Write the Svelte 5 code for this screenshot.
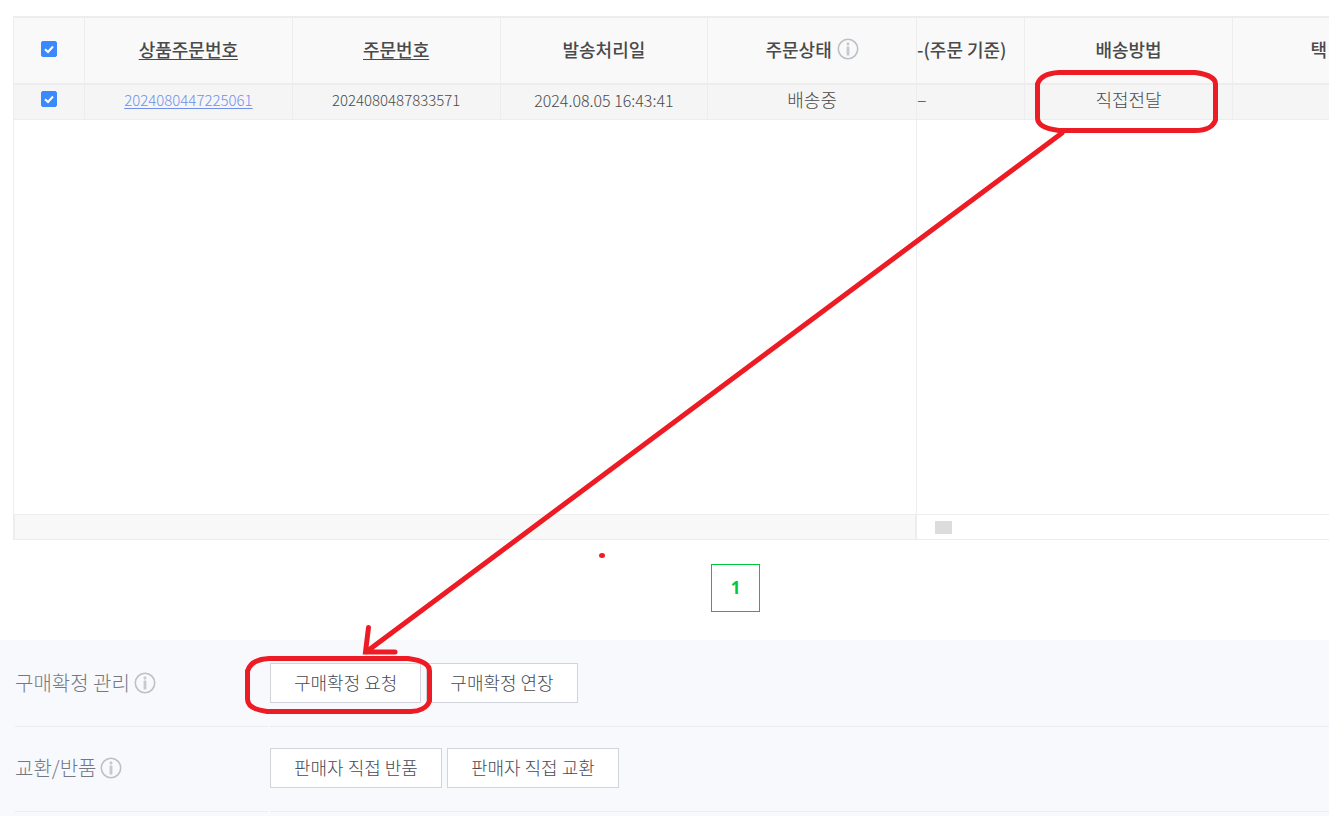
<script>
  let allChecked = $state(true);
  let rowChecked = $state(true);
  const groups = [
    { label: '구매확정 관리', actions: ['구매확정 요청', '구매확정 연장'] },
    { label: '교환/반품', actions: ['판매자 직접 반품', '판매자 직접 교환'] }
  ];
</script>

{#snippet info()}
  <svg class="info" viewBox="0 0 22 22" aria-hidden="true">
    <circle cx="11" cy="11" r="9.7" fill="none" stroke="#bcc0c7" stroke-width="1.6" />
    <rect x="9.6" y="4.600" width="2.800" height="2.800" rx="0.800" fill="#c6c9cf" />
    <rect x="9.6" y="8.600" width="2.800" height="9" rx="0.600" fill="#c6c9cf" />
  </svg>
{/snippet}

<main>
  <section class="grid">
    <div class="pane fixed">
      <table>
        <colgroup><col class="check" /><col /><col /><col /><col /></colgroup>
        <thead>
          <tr>
            <th><input type="checkbox" aria-label="전체" bind:checked={allChecked} /></th>
            <th><a href="#product">상품주문번호</a></th>
            <th><a href="#order">주문번호</a></th>
            <th>발송처리일</th>
            <th><span class="with-info">주문상태 {@render info()}</span></th>
          </tr>
        </thead>
        <tbody>
          <tr>
            <td><input type="checkbox" aria-label="2024080447225061" bind:checked={rowChecked} /></td>
            <td class="num"><a class="link" href="#detail">2024080447225061</a></td>
            <td class="num">2024080487833571</td>
            <td class="num date">2024.08.05 16:43:41</td>
            <td>배송중</td>
          </tr>
        </tbody>
      </table>
      <div class="track"></div>
    </div>
    <div class="pane scrolled">
      <table>
        <colgroup><col class="cut" /><col class="method" /><col /></colgroup>
        <thead>
          <tr><th class="start">-(주문 기준)</th><th>배송방법</th><th class="end">택</th></tr>
        </thead>
        <tbody>
          <tr><td class="start">–</td><td>직접전달</td><td></td></tr>
        </tbody>
      </table>
      <div class="track"><span class="thumb"></span></div>
    </div>
  </section>

  <nav><button class="page">1</button></nav>

  <section class="manage">
    {#each groups as group}
      <div class="row">
        <div class="label with-info">{group.label} {@render info()}</div>
        <div class="actions">
          {#each group.actions as action}<button>{action}</button>{/each}
        </div>
      </div>
    {/each}
  </section>

  <svg class="marks" width="1329" height="816" viewBox="0 0 1329 816" fill="none" stroke="#ed1c24" stroke-width="5" stroke-linecap="round" aria-hidden="true">
    <path d="M1059 72.500H1195C1207 74 1215.500 78 1215.500 84V120C1213 127 1205 130.500 1195 130.500H1059C1047 129 1037.500 125 1037.500 118V84C1040 77 1048 73 1059 72.500Z" />
    <path d="M269 658.500H408C420 660 429.500 664 429.500 671V701C427 708 419 711.500 411 711.500H267C255 710 247.500 706 247.500 699V671C250 663 258 659 269 658.500Z" />
    <path d="M1062 133L366 652M368.500 627.500L365.500 652H395" />
    <ellipse cx="602" cy="555.500" rx="3" ry="2.500" fill="#ed1c24" stroke="none" />
  </svg>
</main>

<style>
  :global(body) {
    margin: 0;
    background: #fff;
    overflow-x: hidden;
  }
  main {
    position: relative;
    overflow: hidden;
    font-family: "Noto Sans CJK KR", sans-serif;
    font-size: 18px;
    font-weight: 300;
    line-height: 24px;
    color: #4a4a4a;
  }
  .grid {
    display: flex;
    padding: 16px 0 0 13px;
  }
  .pane {
    display: flex;
    flex-direction: column;
    min-height: 524px;
    box-sizing: border-box;
    border-right: 1px solid #ededed;
  }
  .fixed {
    flex: 0 0 904px;
    border-left: 1px solid #ededed;
  }
  .scrolled {
    flex: 1;
    min-width: 0;
    border-right: 0;
  }
  table {
    width: 100%;
    table-layout: fixed;
    border-collapse: separate;
    border-spacing: 0;
  }
  .check { width: 71px; }
  .cut { width: 108px; }
  .method { width: 208px; }
  th, td {
    box-sizing: border-box;
    padding: 0 0 4px;
    text-align: center;
    white-space: nowrap;
    border-right: 1px solid #ededed;
  }
  th:last-child, td:last-child { border-right: 0; }
  th {
    height: 69px;
    font-weight: 500;
    background: #f9f9f9;
    border-top: 2px solid #ededed;
    border-bottom: 2px solid #ededed;
  }
  td {
    height: 35px;
    padding-bottom: 6px;
    background: #f5f5f5;
    border-bottom: 1px solid #ededed;
  }
  .start { text-align: left; }
  .end {
    text-align: right;
    padding-right: 2px;
  }
  a {
    color: inherit;
    text-underline-offset: 2px;
    text-decoration-thickness: 1px;
  }
  .num {
    font-size: 15px;
    padding-bottom: 4px;
  }
  .date { font-size: 16px; }
  .link { color: #7090ec; }
  input {
    appearance: none;
    display: block;
    width: 16px;
    height: 16px;
    margin: 0 auto;
    border: 1px solid #ccc;
    border-radius: 2px;
    background: #fff;
  }
  input:checked {
    border-color: #3a89ff;
    background: #3a89ff url("data:image/svg+xml,%3Csvg xmlns='http://www.w3.org/2000/svg' viewBox='0 0 14 14'%3E%3Cpath d='M3 7.200L6 10l5-5.500' fill='none' stroke='white' stroke-width='2'/%3E%3C/svg%3E") center / 14px 14px no-repeat;
  }
  .track {
    height: 26px;
    margin-top: auto;
    box-sizing: border-box;
    border-top: 1px solid #ededed;
    border-bottom: 1px solid #ededed;
    padding: 6px 18px;
  }
  .fixed .track {
    background: #f8f8f8;
    border-left: 1px solid #ededed;
    border-right: 1px solid #ededed;
  }
  .thumb {
    display: block;
    width: 17px;
    height: 13px;
    background: #dcdcdc;
  }
  .with-info {
    display: inline-flex;
    align-items: center;
    gap: 5px;
  }
  .info {
    width: 22px;
    height: 22px;
    flex: none;
  }
  nav {
    display: flex;
    justify-content: center;
    padding: 24px 0 28px 142px;
  }
  button {
    height: 40px;
    padding: 0 23px 3px;
    border: 1px solid #d2d4dc;
    background: #fff;
    color: #464a53;
    font: inherit;
  }
  .page {
    width: 49px;
    height: 48px;
    padding: 0;
    border-color: #00c73c;
    color: #00c73c;
    font-family: "Open Sans", sans-serif;
    font-size: 17px;
    font-weight: 700;
  }
  .manage {
    min-height: 176px;
    padding-left: 15px;
    background: #f8f9fd;
  }
  .row {
    display: grid;
    grid-template-columns: 253px 1fr;
    column-gap: 2px;
  }
  .label, .actions {
    box-sizing: border-box;
    height: 85px;
    padding-bottom: 2px;
    border-bottom: 1px solid #ebedf5;
  }
  .row:first-child .label, .row:first-child .actions {
    height: 87px;
    padding-bottom: 0;
  }
  .label {
    gap: 4px;
    font-size: 20px;
    color: #737883;
  }
  .actions {
    display: flex;
    align-items: center;
    gap: 5px;
  }
  .marks {
    position: absolute;
    top: 0;
    left: 0;
    pointer-events: none;
  }
</style>
